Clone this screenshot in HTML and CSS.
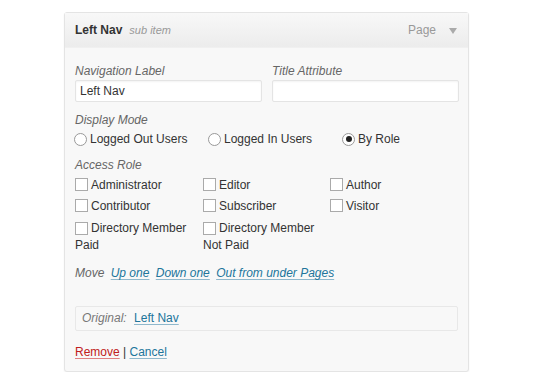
FILE: index.html
```html
<!DOCTYPE html>
<html>
<head>
<meta charset="utf-8">
<link rel="stylesheet" href="styles.css">
</head>
<body>
<div class="item">
  <div class="item-bar">
    <span class="title">Left Nav</span>
    <span class="sub">sub item</span>
    <span class="type">Page</span>
    <span class="arrow"></span>
  </div>
  <div class="settings">
    <div class="fields">
      <label class="field">
        <span class="lbl">Navigation Label</span>
        <span class="input">Left Nav</span>
      </label>
      <label class="field">
        <span class="lbl">Title Attribute</span>
        <span class="input"></span>
      </label>
    </div>
    <div class="group">
      <div class="lbl">Display Mode</div>
      <div class="radios">
        <span class="opt r1"><span class="radio"></span>Logged Out Users</span>
        <span class="opt r2"><span class="radio"></span>Logged In Users</span>
        <span class="opt r3"><span class="radio on"></span>By Role</span>
      </div>
    </div>
    <div class="group g2">
      <div class="lbl">Access Role</div>
      <div class="checks">
        <span class="opt"><span class="cb"></span>Administrator</span>
        <span class="opt"><span class="cb"></span>Editor</span>
        <span class="opt"><span class="cb"></span>Author</span>
        <span class="opt"><span class="cb"></span>Contributor</span>
        <span class="opt"><span class="cb"></span>Subscriber</span>
        <span class="opt"><span class="cb"></span>Visitor</span>
        <span class="opt wrap"><span class="cb"></span>Directory Member Paid</span>
        <span class="opt wrap"><span class="cb"></span>Directory Member Not Paid</span>
      </div>
    </div>
    <div class="move">Move <a>Up one</a> <a>Down one</a> <a>Out from under Pages</a></div>
    <div class="original">Original: <a>Left Nav</a></div>
    <div class="actions"><a class="remove">Remove</a> | <a>Cancel</a></div>
  </div>
</div>
</body>
</html>
```
FILE: styles.css
```css
html, body { margin: 0; padding: 0; background: #fff; }
body {
  font-family: "Liberation Sans", Arial, sans-serif;
  font-size: 12px;
  color: #333;
  padding: 12px 0 0 64px;
}
.item {
  width: 403px;
  border: 1px solid #e4e4e4;
  border-radius: 3px;
  background: #f8f8f8;
  box-shadow: 0 1px 2px rgba(0,0,0,0.06);
}
.item-bar {
  display: flex;
  align-items: center;
  height: 34px;
  padding: 0 11px 0 10px;
  background: linear-gradient(#f8f8f8, #ececec);
  border-bottom: 1px solid #f0f0f0;
}
.title { font-weight: bold; color: #333; }
.sub { font-style: italic; color: #999; margin-left: 7px; font-size: 11px; }
.type { margin-left: auto; color: #999; }
.arrow {
  margin-left: 13px;
  width: 0; height: 0;
  border-left: 4px solid transparent;
  border-right: 4px solid transparent;
  border-top: 6px solid #aaa;
  margin-top: 2px;
}
.settings { padding: 15px 9px 10px 10px; }
.fields { display: flex; gap: 10px; }
.field { display: flex; flex-direction: column; width: 187px; }
.lbl { font-style: italic; color: #666; line-height: 17px; }
.input {
  display: block;
  height: 20px;
  border: 1px solid #e4e4e4;
  border-radius: 2px;
  background: #fff;
  padding: 0 4px;
  line-height: 20px;
  color: #333;
  box-shadow: inset 0 1px 2px rgba(0,0,0,0.05);
}
.field:first-child .input { width: 177px; }
.group { margin-top: 10px; }
.group.g2 { margin-top: 8px; }
.radios { display: flex; height: 20px; align-items: center; }
.opt { display: flex; align-items: flex-start; line-height: 17px; }
.radios .opt { align-items: center; }
.r1 { width: 134px; }
.r2 { width: 134px; }
.radio {
  width: 13px; height: 13px;
  border: 1px solid #999;
  border-radius: 50%;
  background: #fff;
  margin-right: 3px;
  margin-left: -1px;
  box-sizing: border-box;
  position: relative;
}
.radio.on::after {
  content: "";
  position: absolute;
  left: 2.5px; top: 2.5px;
  width: 6px; height: 6px;
  border-radius: 50%;
  background: #222;
}
.checks {
  display: grid;
  grid-template-columns: 128px 127px 1fr;
  row-gap: 4px;
  margin-top: 3px;
}
.checks .opt { line-height: 17px; }
.checks .opt.wrap { display: block; width: 115px; margin-top: 1px; }
.cb {
  display: inline-block;
  vertical-align: top;
  box-sizing: border-box;
  width: 13px; height: 13px;
  border: 1px solid #aaa;
  background: #fff;
  margin-right: 3px;
  margin-top: 1px;
  flex: none;
}
.checks .opt.wrap .cb { margin-top: 2px; }
a { color: #21759b; text-decoration: underline; text-decoration-color: #8fb8cc; text-underline-offset: 2px; }
.move { margin-top: 12px; font-style: italic; color: #666; }
.move a { margin-left: 3px; }
.original {
  margin-top: 26px;
  height: 23px;
  line-height: 23px;
  border: 1px solid #e8e8e8;
  border-radius: 2px;
  padding: 0 6px;
  font-style: italic;
  color: #777;
  width: 369px;
}
.original a { font-style: normal; margin-left: 4px; }
.actions { margin-top: 13px; color: #333; line-height: 17px; }
.remove { color: #c02020; text-decoration-color: #e08080; }
```
